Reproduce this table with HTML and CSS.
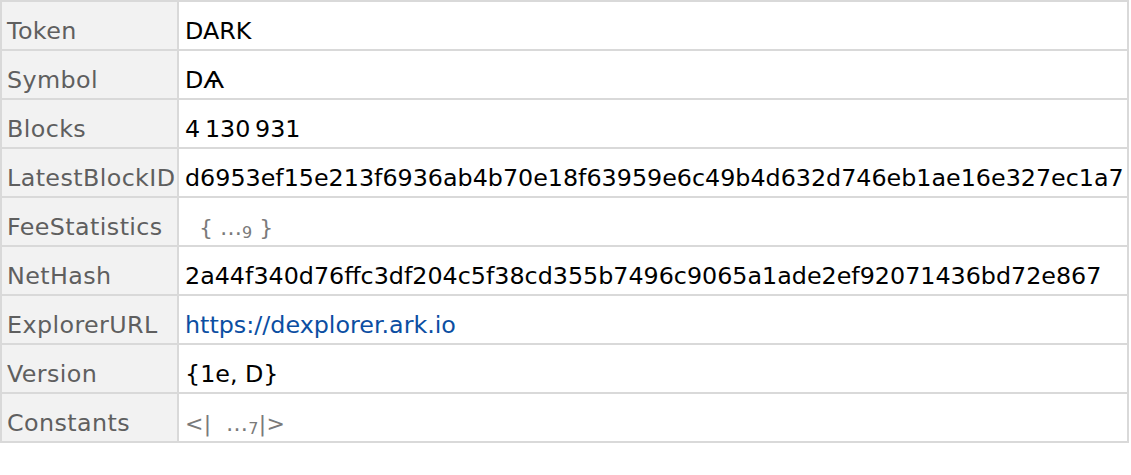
FILE: index.html
```html
<!DOCTYPE html>
<html>
<head>
<meta charset="utf-8">
<link rel="stylesheet" href="styles.css">
</head>
<body>
<div class="grid">
  <div class="key">Token</div><div class="val">DARK</div>
  <div class="key">Symbol</div><div class="val">DѦ</div>
  <div class="key">Blocks</div><div class="val">4&#8201;130&#8201;931</div>
  <div class="key">LatestBlockID</div><div class="val">d6953ef15e213f6936ab4b70e18f63959e6c49b4d632d746eb1ae16e327ec1a7</div>
  <div class="key">FeeStatistics</div><div class="val"><span class="elided">{ …<sub>9</sub> }</span></div>
  <div class="key">NetHash</div><div class="val">2a44f340d76ffc3df204c5f38cd355b7496c9065a1ade2ef92071436bd72e867</div>
  <div class="key">ExplorerURL</div><div class="val"><a class="link" href="#">https://dexplorer.ark.io</a></div>
  <div class="key">Version</div><div class="val">{1e, D}</div>
  <div class="key">Constants</div><div class="val"><span class="assoc">&lt;|&nbsp; …<sub>7</sub>|&gt;</span></div>
</div>
</body>
</html>
```
FILE: styles.css
```css
html, body {
  margin: 0;
  padding: 0;
  background: #ffffff;
}
.grid {
  display: grid;
  grid-template-columns: 175px 948px;
  grid-auto-rows: 47px;
  gap: 2px;
  padding: 2px;
  background: #d9d9d9;
  width: max-content;
  font-family: "DejaVu Sans", Verdana, sans-serif;
  font-size: 23.8px;
}
.key, .val {
  padding-top: 12px;
  line-height: 35px;
  white-space: nowrap;
  overflow: hidden;
}
.key {
  background: #f2f2f2;
  color: #5f5f5f;
  padding-left: 5px;
  letter-spacing: 0.4px;
}
.val {
  background: #ffffff;
  color: #000000;
  padding-left: 6px;
}
.link {
  color: #0b4ea2;
  text-decoration: none;
}
.elided {
  color: #7a7a7a;
  padding-left: 14px;
  font-size: 22px;
}
.assoc {
  color: #7a7a7a;
  font-size: 22px;
  letter-spacing: 0.3px;
}
sub {
  font-size: 16px;
  vertical-align: -3px;
  line-height: 0;
}
```
